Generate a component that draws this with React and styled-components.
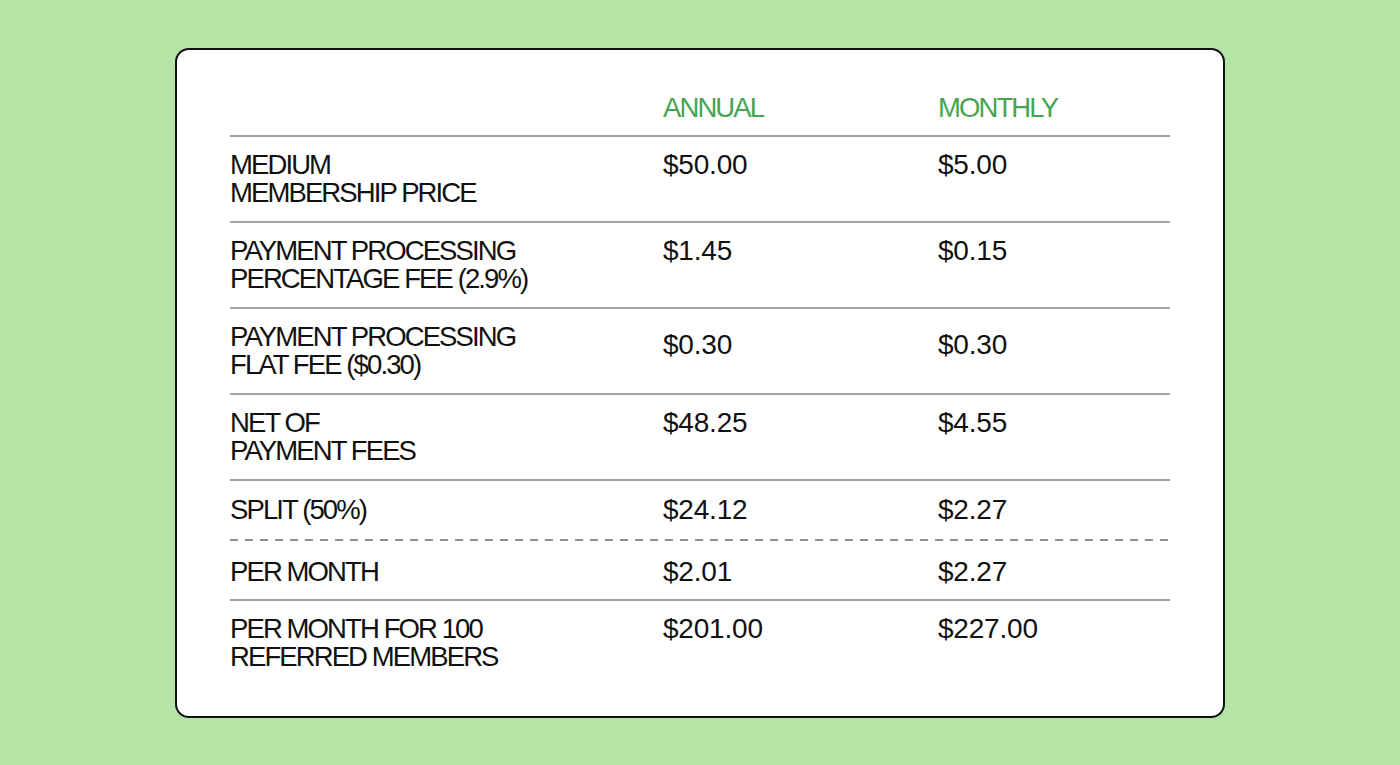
import React from "react";
import styled, { createGlobalStyle } from "styled-components";

const rows = [
	{ label: ["MEDIUM", "MEMBERSHIP PRICE"], annual: "$50.00", monthly: "$5.00" },
	{ label: ["PAYMENT PROCESSING", "PERCENTAGE FEE (2.9%)"], annual: "$1.45", monthly: "$0.15" },
	{ label: ["PAYMENT PROCESSING", "FLAT FEE ($0.30)"], annual: "$0.30", monthly: "$0.30", shift: 8 },
	{ label: ["NET OF", "PAYMENT FEES"], annual: "$48.25", monthly: "$4.55" },
	{ label: ["SPLIT (50%)"], annual: "$24.12", monthly: "$2.27", dashed: true, top: 15, bottom: 15 },
	{ label: ["PER MONTH"], annual: "$2.01", monthly: "$2.27", top: 17, bottom: 13 },
	{ label: ["PER MONTH FOR 100", "REFERRED MEMBERS"], annual: "$201.00", monthly: "$227.00", last: true },
];

const App = () => {
	return (
		<>
			<GlobalStyle />
			<Page>
				<Card>
					<HeaderRow>
						<span />
						<HeadCell>ANNUAL</HeadCell>
						<HeadCell>MONTHLY</HeadCell>
					</HeaderRow>
					{rows.map((row, index) => (
						<Row
							key={index}
							dashed={row.dashed}
							last={row.last}
							top={row.top}
							bottom={row.bottom}
						>
							<Label>
								{row.label.map((line) => (
									<div key={line}>{line}</div>
								))}
							</Label>
							<Value shift={row.shift}>{row.annual}</Value>
							<Value shift={row.shift}>{row.monthly}</Value>
						</Row>
					))}
				</Card>
			</Page>
		</>
	);
};

const GlobalStyle = createGlobalStyle`
	html, body {
		margin: 0;
		padding: 0;
		background: #b4e5a7;
	}
	* {
		box-sizing: border-box;
	}
`;

const Page = styled.div`
	width: 1400px;
	height: 765px;
	display: flex;
	align-items: center;
	justify-content: center;
	background: #b4e5a7;
	font-family: "Liberation Sans", Arial, sans-serif;
	color: #111;
`;

const Card = styled.div`
	width: 1050px;
	height: 670px;
	background: #fff;
	border: 2px solid #111;
	border-radius: 14px;
	padding: 0 53px 0 53px;
	display: flex;
	flex-direction: column;
`;

const grid = `
	display: grid;
	grid-template-columns: 433px 275px 1fr;
`;

const HeaderRow = styled.div`
	${grid}
	height: 87px;
	align-items: end;
	padding-bottom: 13px;
	border-bottom: 2px solid #a3a3a3;
`;

const HeadCell = styled.span`
	font-size: 27.5px;
	line-height: 28px;
	letter-spacing: -1.9px;
	color: #44a552;
`;

const Row = styled.div`
	${grid}
	position: relative;
	padding: ${({ top }) => top ?? 14}px 0 ${({ bottom }) => bottom ?? 14}px;
	border-bottom: ${({ dashed, last }) =>
		dashed || last ? "none" : "2px solid #a3a3a3"};
	margin-bottom: ${({ dashed }) => (dashed ? "2px" : "0")};

	&::after {
		content: "";
		display: ${({ dashed }) => (dashed ? "block" : "none")};
		position: absolute;
		left: 0;
		right: 0;
		bottom: -2px;
		height: 2px;
		background-image: repeating-linear-gradient(
			to right,
			#8f8f8f 0,
			#8f8f8f 8px,
			transparent 8px,
			transparent 15px
		);
	}
`;

const Label = styled.div`
	font-size: 27.5px;
	line-height: 28px;
	letter-spacing: -1.9px;
`;

const Value = styled.div`
	font-size: 28px;
	line-height: 28px;
	letter-spacing: -0.2px;
	padding-top: ${({ shift }) => shift ?? 0}px;
`;

export default App;
